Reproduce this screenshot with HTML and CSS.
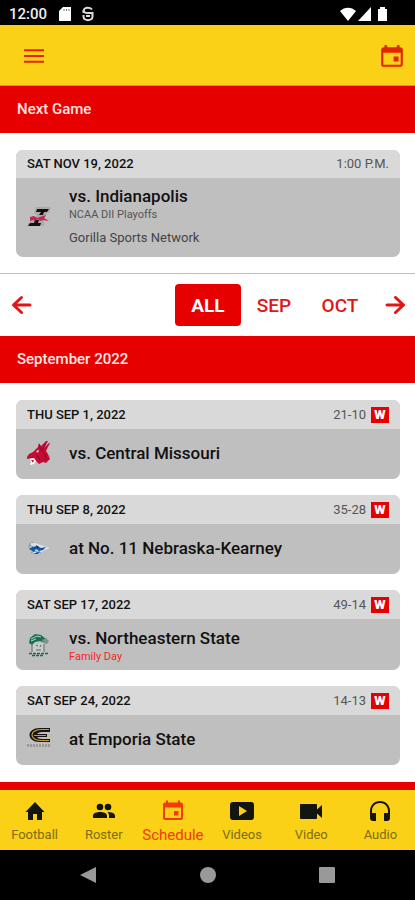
FILE: index.html
```html
<!DOCTYPE html>
<html lang="en">
<head>
<meta charset="utf-8">
<meta name="viewport" content="width=device-width, initial-scale=1">
<title>Schedule</title>
<link rel="stylesheet" href="styles.css">
</head>
<body>
<svg class="defs" aria-hidden="true">
  <symbol id="calendar" viewBox="0 0 24 24"><path fill-rule="evenodd" d="M5 2h2.500v2h9V2H19v2c2 0 3 1 3 2.500v13c0 1.700-1 2.500-2.500 2.500h-15C3 22 2 21.200 2 19.500v-13C2 5 3 4 5 4zM4 9v10.500c0 .3.200.5.500.5h15c.3 0 .5-.2.500-.5V9zM13.500 12.500h4.500V17h-4.500z"/></symbol>
  <symbol id="arrow-left" viewBox="0 0 24 24"><path d="M20 12H4M11.500 4.500l-8 7.500 8 7.500" fill="none" stroke="currentColor" stroke-width="3" stroke-linecap="round" stroke-linejoin="round"/></symbol>
</svg>

<div class="status">
  <span class="clock">12:00</span>
  <svg class="status-icon" viewBox="0 0 14 16"><path d="M5 1h8v14H1V5z" fill="#fff"/><path d="M6 3v2M8.500 3v2M11 3v2" stroke="#777" stroke-width="1"/></svg>
  <svg class="status-icon second" viewBox="0 0 14 16"><path d="M11 3.500C9 1 4 1 3 3.500 2 6 4 7 7 7h4.500v3.500c0 5-9 5-9 0V9M2.500 7V4M5 10h4" fill="none" stroke="#ddd" stroke-width="2"/></svg>
  <svg class="signals" viewBox="0 0 48 16">
    <path d="M0 5C4.500.5 11.500.5 16 5L8 15zM18 15 31 1v14zM38 3h2V1h5v2h2v12h-9z" fill="#fff"/>
  </svg>
</div>

<header class="appbar">
  <button class="icon-button" aria-label="Menu"><svg class="menu-icon" viewBox="0 0 20 14"><path d="M0 1.200h20M0 7h20M0 12.800h20" stroke="currentColor" stroke-width="2"/></svg></button>
  <button class="icon-button" aria-label="Calendar"><svg class="calendar-icon"><use href="#calendar"/></svg></button>
</header>

<main>
  <h2 class="section-title">Next Game</h2>
  <section class="games">
    <article class="card next">
      <div class="card-head"><span class="date">SAT NOV 19, 2022</span><span class="time">1:00 P.M.</span></div>
      <div class="card-body">
        <svg class="logo" viewBox="0 0 24 24"><path d="M9 2h15l-2 6h-2l-3 8v5H0l4-7h4l2-5H7z" fill="#aaa"/><path d="M10 4h12l-2 3h-3l-1 3h-4l2-3h-5zM8 15h4l-1 3h3l-1 3H1l2-3h4z" fill="#111"/><path d="m3 12 4-1 3 2 3-1 6-2-2 3 5 3-6-1-3 1-2-2-3 2-2-1-3 1z" fill="#c72354"/></svg>
        <div class="info"><h3>vs. Indianapolis</h3><p class="note">NCAA DII Playoffs</p><p class="network">Gorilla Sports Network</p></div>
      </div>
    </article>
  </section>

  <nav class="months" aria-label="Months">
    <button class="arrow" aria-label="Previous"><svg><use href="#arrow-left"/></svg></button>
    <div class="month-list">
      <button class="month active">ALL</button>
      <button class="month">SEP</button>
      <button class="month">OCT</button>
    </div>
    <button class="arrow next-arrow" aria-label="Next"><svg><use href="#arrow-left"/></svg></button>
  </nav>

  <h2 class="section-title">September 2022</h2>
  <section class="games">
    <article class="card">
      <div class="card-head"><span class="date">THU SEP 1, 2022</span><span class="score">21-10</span><span class="win">W</span></div>
      <div class="card-body">
        <svg class="logo" viewBox="0 0 24 24"><path d="m0 16 2-3 4-2 5-5 1-4 2 3 5-5h2l-4 7 5-5h1l-4 8 2 3 2 5-4 4-3-1-4 2-3-3-4-3-5 1z" fill="#c30d34"/><path d="m12 4 2 5 4 4 1 6M19 3l-4 6M10 14l3 5" fill="none" stroke="#79112a"/><path d="m3 18 4-1 2 3-2 3-4 1 1-3z" fill="#fff"/><path d="m4 19 3 0-1 3z" fill="#b4242f"/><path d="m9 10 3-1-1 3z" fill="#eadadb"/></svg>
        <div class="info"><h3>vs. Central Missouri</h3></div>
      </div>
    </article>
    <article class="card">
      <div class="card-head"><span class="date">THU SEP 8, 2022</span><span class="score">35-28</span><span class="win">W</span></div>
      <div class="card-body">
        <svg class="logo" viewBox="0 0 24 24"><path d="m4 6 4 1 6 2 9 3-5 2-5 3-6 1-3-5z" fill="#dde0e5"/><path d="M2 12c0-5 3-7 5-5M3 9l3 2M4 17l3-2 7 2" fill="none" stroke="#7794bf"/><path d="m5 11 5-1 4 2 5-1-3 3-4 1-3-2-2 3-5-3zM6 18l7-3-2 3z" fill="#1256ab"/><path d="m9 9 3 2-2 1z" fill="#222"/></svg>
        <div class="info"><h3>at No. 11 Nebraska-Kearney</h3></div>
      </div>
    </article>
    <article class="card tall">
      <div class="card-head"><span class="date">SAT SEP 17, 2022</span><span class="score">49-14</span><span class="win">W</span></div>
      <div class="card-body">
        <svg class="logo" viewBox="0 0 24 24"><path d="M4 10h14v10H5z" fill="#c9cbca"/><path d="M2 10 3 5l5-4 6 1 5 4-1 4-5-2-5 1-3 3z" fill="#147052"/><path d="m15 7 4-2 3 3-2 3-4-1z" fill="#7c9188"/><path d="m4 6 6-3 4 1M4 8l5-2" fill="none" stroke="#b9d4c9"/><path d="M5 10v9M17 11v8M9 12l2 1M13 14l1-2M9 17h5" stroke="#526a61" stroke-width="1"/><path d="M2 20.500h19M5 22.500h12" stroke="#25604d" stroke-width="1.500" stroke-dasharray="3 1"/></svg>
        <div class="info"><h3>vs. Northeastern State</h3><p class="promo">Family Day</p></div>
      </div>
    </article>
    <article class="card">
      <div class="card-head"><span class="date">SAT SEP 24, 2022</span><span class="score">14-13</span><span class="win">W</span></div>
      <div class="card-body">
        <svg class="logo" viewBox="0 0 24 24"><path d="M23 1v4h-8c-3 0-4 1-5 2h10v3H10c1 1 2 2 5 2h8v3H13C-1 15-1 1 13 1z" fill="#171511"/><path d="M22 2.500h-8c-12 0-12 11 0 11h8M7 8.500h12" fill="none" stroke="#c79c3b" stroke-width="1.200"/><path d="M0 18.500h24" stroke="#999" stroke-width="3" stroke-dasharray="2 1"/></svg>
        <div class="info"><h3>at Emporia State</h3></div>
      </div>
    </article>
  </section>
</main>

<nav class="tabs" aria-label="Main">
  <a href="#"><svg viewBox="0 0 24 24"><path d="M10 21v-6h4v6h5v-8h2.500L12 3 2.500 13H5v8z"/></svg><span>Football</span></a>
  <a href="#"><svg viewBox="0 0 24 24"><circle cx="8" cy="8" r="3.300"/><circle cx="16" cy="8" r="3.300"/><path d="M1 19v-2.500C1 14 5 13 8 13s7 1 7 3.500V19zM15.500 13c3 0 7.500 1 7.500 3.500V19h-6v-2.500c0-1.500-.7-2.500-1.500-3.500z"/></svg><span>Roster</span></a>
  <a href="#" class="current"><svg viewBox="0 0 24 24"><path fill-rule="evenodd" d="M5 1.500h2v2h10v-2h2v2h1c1 0 2 1 2 2V19c0 1-1 2-2 2H4c-1 0-2-1-2-2V5.500c0-1 1-2 2-2h1zM4 8.500V19h16V8.500zM13 12h4.500v4.500H13z"/></svg><span>Schedule</span></a>
  <a href="#"><svg viewBox="0 0 24 24"><path fill-rule="evenodd" d="M3 3h18c2 0 3 1 3 3v12c0 2-1 3-3 3H3c-2 0-3-1-3-3V6c0-2 1-3 3-3zm6 4v10l8-5z"/></svg><span>Videos</span></a>
  <a href="#"><svg viewBox="0 0 24 24"><path d="M18 10.500V6c0-.6-.4-1-1-1H2c-.6 0-1 .4-1 1v13c0 .6.400 1 1 1h15c.6 0 1-.4 1-1v-4.500l5 4.500V6z"/></svg><span>Video</span></a>
  <a href="#"><svg viewBox="0 0 24 24"><path d="M12 2C6.500 2 2 6 2 12v7c0 1.700 1.300 3 3 3h3v-8H4v-2c0-4.500 3.500-8 8-8s8 3.500 8 8v2h-4v8h3c1.700 0 3-1.300 3-3v-7c0-6-4.500-10-10-10z"/></svg><span>Audio</span></a>
</nav>

<div class="system">
  <button aria-label="Back"><svg viewBox="0 0 18 18"><path d="M17 1v16L1 9z"/></svg></button>
  <button aria-label="Home"><svg viewBox="0 0 18 18"><circle cx="9" cy="9" r="8"/></svg></button>
  <button aria-label="Recents"><svg viewBox="0 0 18 18"><rect x="1" y="1" width="16" height="16" rx="1"/></svg></button>
</div>
</body>
</html>
```
FILE: styles.css
```css
* { box-sizing: border-box; }
body {
  margin: 0;
  min-height: 100vh;
  display: flex;
  flex-direction: column;
  background: #fff;
  color: #111;
  font-family: Roboto, "Liberation Sans", sans-serif;
}
h2, h3, p { margin: 0; }
button { padding: 0; border: 0; background: none; font: inherit; color: inherit; }
svg { display: block; fill: currentColor; }
.defs { position: absolute; width: 0; height: 0; }

.status {
  display: flex;
  align-items: center;
  height: 25px;
  padding: 2px 27px 0 9px;
  background: #000;
  color: #eee;
}
.clock { font-size: 15px; font-weight: 500; line-height: 20px; }
.status-icon { width: 14px; height: 16px; margin-left: 11px; }
.second { margin-left: 9px; }
.signals { width: 48px; height: 16px; margin-left: auto; }

.appbar {
  display: flex;
  align-items: center;
  justify-content: space-between;
  height: 61px;
  padding: 2px 10px 0;
  background: #fad116;
  border-bottom: 1px solid #c49a28;
  color: #e32400;
}
.icon-button { display: grid; place-items: center; width: 48px; height: 48px; }
.appbar .icon-button:last-child { width: 26px; }
.menu-icon { width: 20px; height: 14px; }
.calendar-icon { width: 26px; height: 26px; }

main { flex: 1; }
.section-title {
  height: 47px;
  padding: 0 17px;
  background: #e60000;
  color: #ffe6e2;
  font-size: 15px;
  font-weight: 500;
  line-height: 47px;
}
.games { display: flex; flex-direction: column; gap: 16px; padding: 17px 15px 16px 16px; }
.card { border-radius: 7px; background: #bfbfbf; overflow: hidden; }
.card-head {
  display: flex;
  align-items: center;
  height: 29px;
  padding: 0 11px;
  background: #d9d9d9;
  font-size: 13px;
}
.next .card-head { height: 28px; padding-bottom: 2px; }
.date { margin-right: auto; font-weight: 500; }
.time, .score { color: #555; }
.win {
  width: 18px;
  height: 16px;
  margin-left: 5px;
  background: #e60000;
  color: #fff;
  font-size: 13px;
  font-weight: 900;
  line-height: 16px;
  text-align: center;
}
.card-body {
  display: flex;
  align-items: center;
  gap: 18px;
  min-height: 50px;
  padding: 0 11px 2px;
}
.tall .card-body { min-height: 51px; padding-bottom: 0; }
.tall .info { padding-top: 4px; }
.next .card-body { min-height: 79px; }
.logo { width: 24px; height: 24px; }
.info h3 { font-size: 17px; font-weight: 500; line-height: 20px; }
.note, .promo { font-size: 11px; line-height: 18px; }
.note { color: #555; }
.promo { color: #f52525; }
.network { margin-top: 4px; color: #444; font-size: 13px; line-height: 20px; }

.months {
  display: flex;
  align-items: center;
  height: 63px;
  padding: 0 8px 0 10px;
  border-top: 1px solid #f2a8a8;
  color: #df1717;
}
.month-list { display: flex; flex: 1; justify-content: flex-end; }
.month { width: 66px; height: 42px; font-size: 19px; font-weight: 500; }
.active { border-radius: 4px; background: #e60000; color: #fff; font-weight: 700; }
.arrow svg { width: 24px; height: 24px; }
.next-arrow { margin-left: 10px; transform: rotate(180deg); }

.tabs {
  display: grid;
  grid-template-columns: repeat(6, 1fr);
  height: 68px;
  border-top: 8px solid #e60000;
  background: #fad116;
}
.tabs a {
  display: flex;
  flex-direction: column;
  align-items: center;
  padding-top: 9px;
  color: #15150f;
  font-size: 13px;
  line-height: 16px;
  text-decoration: none;
}
.tabs svg { width: 24px; height: 24px; }
.tabs span { margin-top: 4px; color: #806c12; }
.tabs .current, .tabs .current span { color: #f33a0d; }
.tabs .current { font-size: 15px; }

.system {
  display: flex;
  align-items: center;
  justify-content: space-between;
  height: 50px;
  padding: 0 79px;
  background: #000;
  color: #999;
}
.system svg { width: 18px; height: 18px; }
```
